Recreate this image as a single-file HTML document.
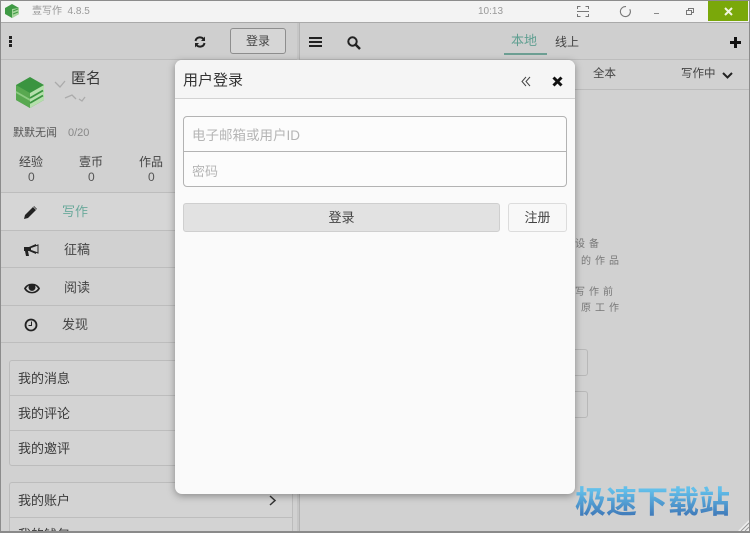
<!DOCTYPE html>
<html><head><meta charset="utf-8">
<style>
html,body{margin:0;padding:0;width:750px;height:533px;overflow:hidden;background:#d1d1d1}
body{position:relative;font-family:"Liberation Sans","Noto Sans CJK SC",sans-serif;color:#333}
.a{position:absolute;white-space:nowrap}
.l{position:absolute;background:#bdbdbd}
svg{position:absolute;overflow:visible}
.t{font-size:13px;line-height:16px;color:#3a3a3a}
</style></head><body>
<!-- title bar -->
<div class="a" style="left:0;top:0;width:750px;height:22px;background:#f3f3f3"></div>
<div class="l" style="left:0;top:22px;width:750px;height:1px;background:#a9a9a9"></div>
<svg style="left:4px;top:3px" width="16" height="16" viewBox="0 0 16 16"><path d="M8 1L15 5V11L8 15L1 11V5Z" fill="#3f9a45"/><path d="M8 6L15 5V11L8 15Z" fill="#a8d69d"/><path d="M9 8l5-2M9 11l5-2" stroke="#3f9a45"/></svg>
<div class="a" style="left:32px;top:5px;font-size:10px;line-height:14px;color:#999">壹写作&nbsp; 4.8.5</div>
<div class="a" style="left:478px;top:5px;font-size:10px;line-height:14px;color:#999">10:13</div>
<svg style="left:577px;top:6px" width="12" height="11" viewBox="0 0 12 11" fill="none" stroke="#777"><path d="M0.5 3V.5H3.5M8.5 .5H11.5V3M.5 8V10.5H3.5M8.5 10.5H11.5V8M0 5.500H12"/></svg>
<svg style="left:620px;top:6px" width="11" height="11" viewBox="0 0 11 11" fill="none" stroke="#777" stroke-width="1.100"><path d="M9.800 3.200A5 5 0 1 1 6 .6"/></svg>
<div class="l" style="left:654px;top:13px;width:5px;height:1px;background:#888"></div>
<svg style="left:686px;top:8px" width="8" height="7" viewBox="0 0 8 7" fill="none" stroke="#777"><path d="M.5 2.500H5.500V6.500H.5ZM2.500 2V.5H7.500V4.500H6"/></svg>
<div class="a" style="left:708px;top:1px;width:40px;height:20px;background:#7aa80a"></div>
<svg style="left:724px;top:7px" width="9" height="9" viewBox="0 0 9 9" stroke="#f2f6df" stroke-width="2"><path d="M1 1L8 8M8 1L1 8"/></svg>
<!-- toolbar -->
<div class="a" style="left:0;top:23px;width:750px;height:36px;background:#cfcfcf"></div>
<div class="l" style="left:0;top:59px;width:750px;height:1px"></div>
<div class="l" style="left:297px;top:23px;width:3px;height:510px;background:#c6c6c6"></div>
<div class="l" style="left:299px;top:23px;width:1px;height:510px;background:#b4b4b4"></div>
<div class="a" style="left:9px;top:36px;width:3px;height:3px;background:#222;box-shadow:0 4px 0 #222,0 8px 0 #222"></div>
<svg style="left:194px;top:36px" width="12" height="12" viewBox="0 0 12 12" fill="none" stroke="#222" stroke-width="2"><path d="M1.500 5A4.500 4.500 0 0 1 10 4M10.500 7A4.500 4.500 0 0 1 2 8"/><path d="M11 .5V5H7ZM1 11.500V7H5Z" fill="#222" stroke="none"/></svg>
<div class="a" style="left:230px;top:28px;width:54px;height:24px;border:1px solid #8e8e8e;border-radius:3px;background:#d6d6d6;text-align:center;font-size:12px;line-height:25px;color:#444">登录</div>
<div class="a" style="left:309px;top:37px;width:13px;height:2px;background:#222;box-shadow:0 4px 0 #222,0 8px 0 #222"></div>
<svg style="left:347px;top:36px" width="14" height="14" viewBox="0 0 14 14" fill="none" stroke="#222" stroke-width="2"><circle cx="5.500" cy="5.500" r="4.200"/><path d="M8.500 8.500L13 13" stroke-width="2.500"/></svg>
<div class="a" style="left:511px;top:32px;font-size:13px;line-height:18px;color:#5f9f91">本地</div>
<div class="l" style="left:504px;top:53px;width:43px;height:2px;background:#6d9f94"></div>
<div class="a" style="left:555px;top:33px;font-size:12px;line-height:18px;color:#444">线上</div>
<div class="l" style="left:734px;top:37px;width:3px;height:11px;background:#111"></div>
<div class="l" style="left:730px;top:41px;width:11px;height:3px;background:#111"></div>
<!-- right filter bar -->
<div class="l" style="left:301px;top:89px;width:449px;height:1px;background:#bcbcbc"></div>
<div class="a" style="left:593px;top:66px;font-size:11.500px;line-height:16px;color:#444">全本</div>
<div class="a" style="left:681px;top:66px;font-size:11.500px;line-height:16px;color:#444">写作中</div>
<svg style="left:722px;top:72px" width="11" height="7" viewBox="0 0 11 7" fill="none" stroke="#222" stroke-width="2"><path d="M1 1L5.500 5.500L10 1"/></svg>
<!-- right text -->
<div class="a" style="left:575px;top:238px;font-size:10px;line-height:14px;letter-spacing:4px;color:#777">设备</div>
<div class="a" style="left:581px;top:255px;font-size:10px;line-height:14px;letter-spacing:4px;color:#777">的作品</div>
<div class="a" style="left:575px;top:286px;font-size:10px;line-height:14px;letter-spacing:4px;color:#777">写作前</div>
<div class="a" style="left:581px;top:302px;font-size:10px;line-height:14px;letter-spacing:4px;color:#777">原工作</div>
<div class="a" style="left:560px;top:349px;width:26px;height:25px;border:1px solid #b8b8b8;border-radius:3px"></div>
<div class="a" style="left:560px;top:391px;width:26px;height:25px;border:1px solid #b8b8b8;border-radius:3px"></div>
<!-- profile -->
<svg style="left:16px;top:77px" width="28" height="31" viewBox="0 0 28 31"><path d="M14 0L28 8V23L14 31L0 23V8Z" fill="#3a9440"/><path d="M0 8L14 16V31L0 23Z" fill="#58a850"/><path d="M14 16L28 8V23L14 31Z" fill="#b5dfac"/><path d="M0 14.500L14 22.500M0 15.500L14 23.500" stroke="#8ccb82"/><path d="M14 21L27 13.500M14 26L27 18.500" stroke="#3a9440" stroke-width="1.800"/></svg>
<svg style="left:54px;top:78px" width="40" height="28" viewBox="0 0 40 28" fill="none" stroke="#ababab" stroke-width="1.300"><path d="M1 4L6 9L11 3M11 20L18 17L22 21M25 21L28 23L31 19"/></svg>
<div class="a" style="left:71px;top:69px;font-size:15px;line-height:20px;color:#3a3a3a">匿名</div>
<div class="a" style="left:13px;top:125px;font-size:11px;line-height:16px;color:#555">默默无闻</div>
<div class="a" style="left:68px;top:125px;font-size:11px;line-height:16px;color:#888">0/20</div>
<div class="a t" style="left:19px;top:154px;font-size:12px;color:#444">经验</div>
<div class="a t" style="left:79px;top:154px;font-size:12px;color:#444">壹币</div>
<div class="a t" style="left:139px;top:154px;font-size:12px;color:#444">作品</div>
<div class="a t" style="left:28px;top:169px;font-size:12px;color:#555">0</div>
<div class="a t" style="left:88px;top:169px;font-size:12px;color:#555">0</div>
<div class="a t" style="left:148px;top:169px;font-size:12px;color:#555">0</div>
<!-- nav -->
<div class="l" style="left:0;top:192px;width:297px;height:1px"></div>
<div class="a" style="left:0;top:193px;width:297px;height:37px;background:#d6d6d6"></div>
<div class="l" style="left:0;top:230px;width:297px;height:1px"></div>
<div class="l" style="left:0;top:267px;width:297px;height:1px"></div>
<div class="l" style="left:0;top:305px;width:297px;height:1px"></div>
<div class="l" style="left:0;top:342px;width:297px;height:1px"></div>
<svg style="left:24px;top:206px" width="13" height="13" viewBox="0 0 13 13" fill="#222"><path d="M0 13L1 9L9 1L12 4L4 12ZM10 0L13 3L12.500 3.500L9.500 .5Z"/></svg>
<div class="a" style="left:62px;top:203px;font-size:13px;line-height:18px;color:#6aa99b">写作</div>
<svg style="left:24px;top:244px" width="15" height="13" viewBox="0 0 15 13"><path d="M0 3H5L12 0V10L5 7H4L5 12H2L1 7H0Z" fill="#222"/><path d="M7 3.500L14 1V9L7 6.500" fill="#d0d0d0" stroke="#222"/></svg>
<div class="a" style="left:64px;top:241px;font-size:13px;line-height:18px;color:#444">征稿</div>
<svg style="left:24px;top:283px" width="16" height="11" viewBox="0 0 16 11"><path d="M0 5.500C3 -1 13 -1 16 5.500C13 12 3 12 0 5.500Z" fill="#222"/><path d="M2 5.500C5 10 11 10 14 5.500C13 4 12 3 11 2.500A3.500 3.500 0 1 1 5 2.500C4 3 3 4 2 5.500Z" fill="#d0d0d0"/><circle cx="8" cy="5" r="2.800" fill="#222"/></svg>
<div class="a" style="left:64px;top:279px;font-size:13px;line-height:18px;color:#444">阅读</div>
<svg style="left:24px;top:318px" width="14" height="14" viewBox="0 0 14 14" fill="none" stroke="#222"><circle cx="7" cy="7" r="5.500" stroke-width="1.800"/><path d="M7.500 3.500V7.500H4.500"/></svg>
<div class="a" style="left:62px;top:316px;font-size:13px;line-height:18px;color:#444">发现</div>
<!-- groups -->
<div class="a" style="left:9px;top:360px;width:282px;height:104px;border:1px solid #bcbcbc;border-radius:3px;background:#d3d3d3"></div>
<div class="l" style="left:10px;top:395px;width:282px;height:1px"></div>
<div class="l" style="left:10px;top:430px;width:282px;height:1px"></div>
<div class="a t" style="left:18px;top:371px">我的消息</div>
<div class="a t" style="left:18px;top:406px">我的评论</div>
<div class="a t" style="left:18px;top:441px">我的邀评</div>
<div class="a" style="left:9px;top:482px;width:282px;height:60px;border:1px solid #bcbcbc;border-radius:3px;background:#d3d3d3"></div>
<div class="l" style="left:10px;top:517px;width:282px;height:1px"></div>
<div class="a t" style="left:18px;top:493px">我的账户</div>
<div class="a t" style="left:18px;top:527px">我的钱包</div>
<svg style="left:269px;top:495px" width="7" height="11" viewBox="0 0 7 11" fill="none" stroke="#333" stroke-width="1.500"><path d="M1 1L6 5.500L1 10"/></svg>
<!-- dialog -->
<div class="a" style="left:175px;top:60px;width:400px;height:434px;background:#fafafa;border-radius:7px;box-shadow:0 2px 8px rgba(0,0,0,.35);overflow:hidden">
<div class="a" style="left:0;top:0;width:400px;height:38px;background:#f5f5f5;border-bottom:1px solid #d2d2d2"></div>
<div class="a" style="left:8px;top:9px;font-size:15px;line-height:23px;color:#333">用户登录</div>
<svg style="left:346px;top:16px" width="10" height="11" viewBox="0 0 10 11" fill="none" stroke="#444"><path d="M5 1L1 5.500L5 10M9 1L5 5.500L9 10"/></svg>
<svg style="left:377px;top:16px" width="11" height="11" viewBox="0 0 11 11" stroke="#111" stroke-width="3"><path d="M1.500 1.500L9.500 9.500M9.500 1.500L1.500 9.500"/></svg>
<div class="a" style="left:8px;top:56px;width:382px;height:69px;border:1px solid #b3b3b3;border-radius:4px;background:#fcfcfc"></div>
<div class="l" style="left:9px;top:91px;width:382px;height:1px;background:#b3b3b3"></div>
<div class="a" style="left:17px;top:67px;font-size:13.500px;line-height:18px;color:#b5b5b5">电子邮箱或用户ID</div>
<div class="a" style="left:17px;top:102px;font-size:13px;line-height:19px;color:#b5b5b5">密码</div>
<div class="a" style="left:8px;top:143px;width:315px;height:27px;border:1px solid #cfcfcf;border-radius:3px;background:#e2e2e2;text-align:center;font-size:13px;line-height:27px;color:#444">登录</div>
<div class="a" style="left:333px;top:143px;width:57px;height:27px;border:1px solid #dcdcdc;border-radius:3px;background:#f8f8f8;text-align:center;font-size:13px;line-height:27px;color:#444">注册</div>
</div>
<!-- watermark -->
<div class="a" style="left:575px;top:484px;font-size:31px;line-height:38px;font-weight:bold;background:linear-gradient(#63bfea 15%,#3f78b8 85%);-webkit-background-clip:text;background-clip:text;color:transparent">极速下载站</div>
<!-- outer border -->
<div class="a" style="left:0;top:0;width:748px;height:531px;border:1px solid #8c8c8c"></div>
<div class="l" style="left:0;top:531px;width:750px;height:2px;background:#8a8a8a"></div>
<svg style="left:738px;top:520px" width="11" height="11" viewBox="0 0 11 11"><path d="M11 0V11H0Z" fill="#eee"/><path d="M11 3L3 11M11 7L7 11" stroke="#999"/></svg>
</body></html>
